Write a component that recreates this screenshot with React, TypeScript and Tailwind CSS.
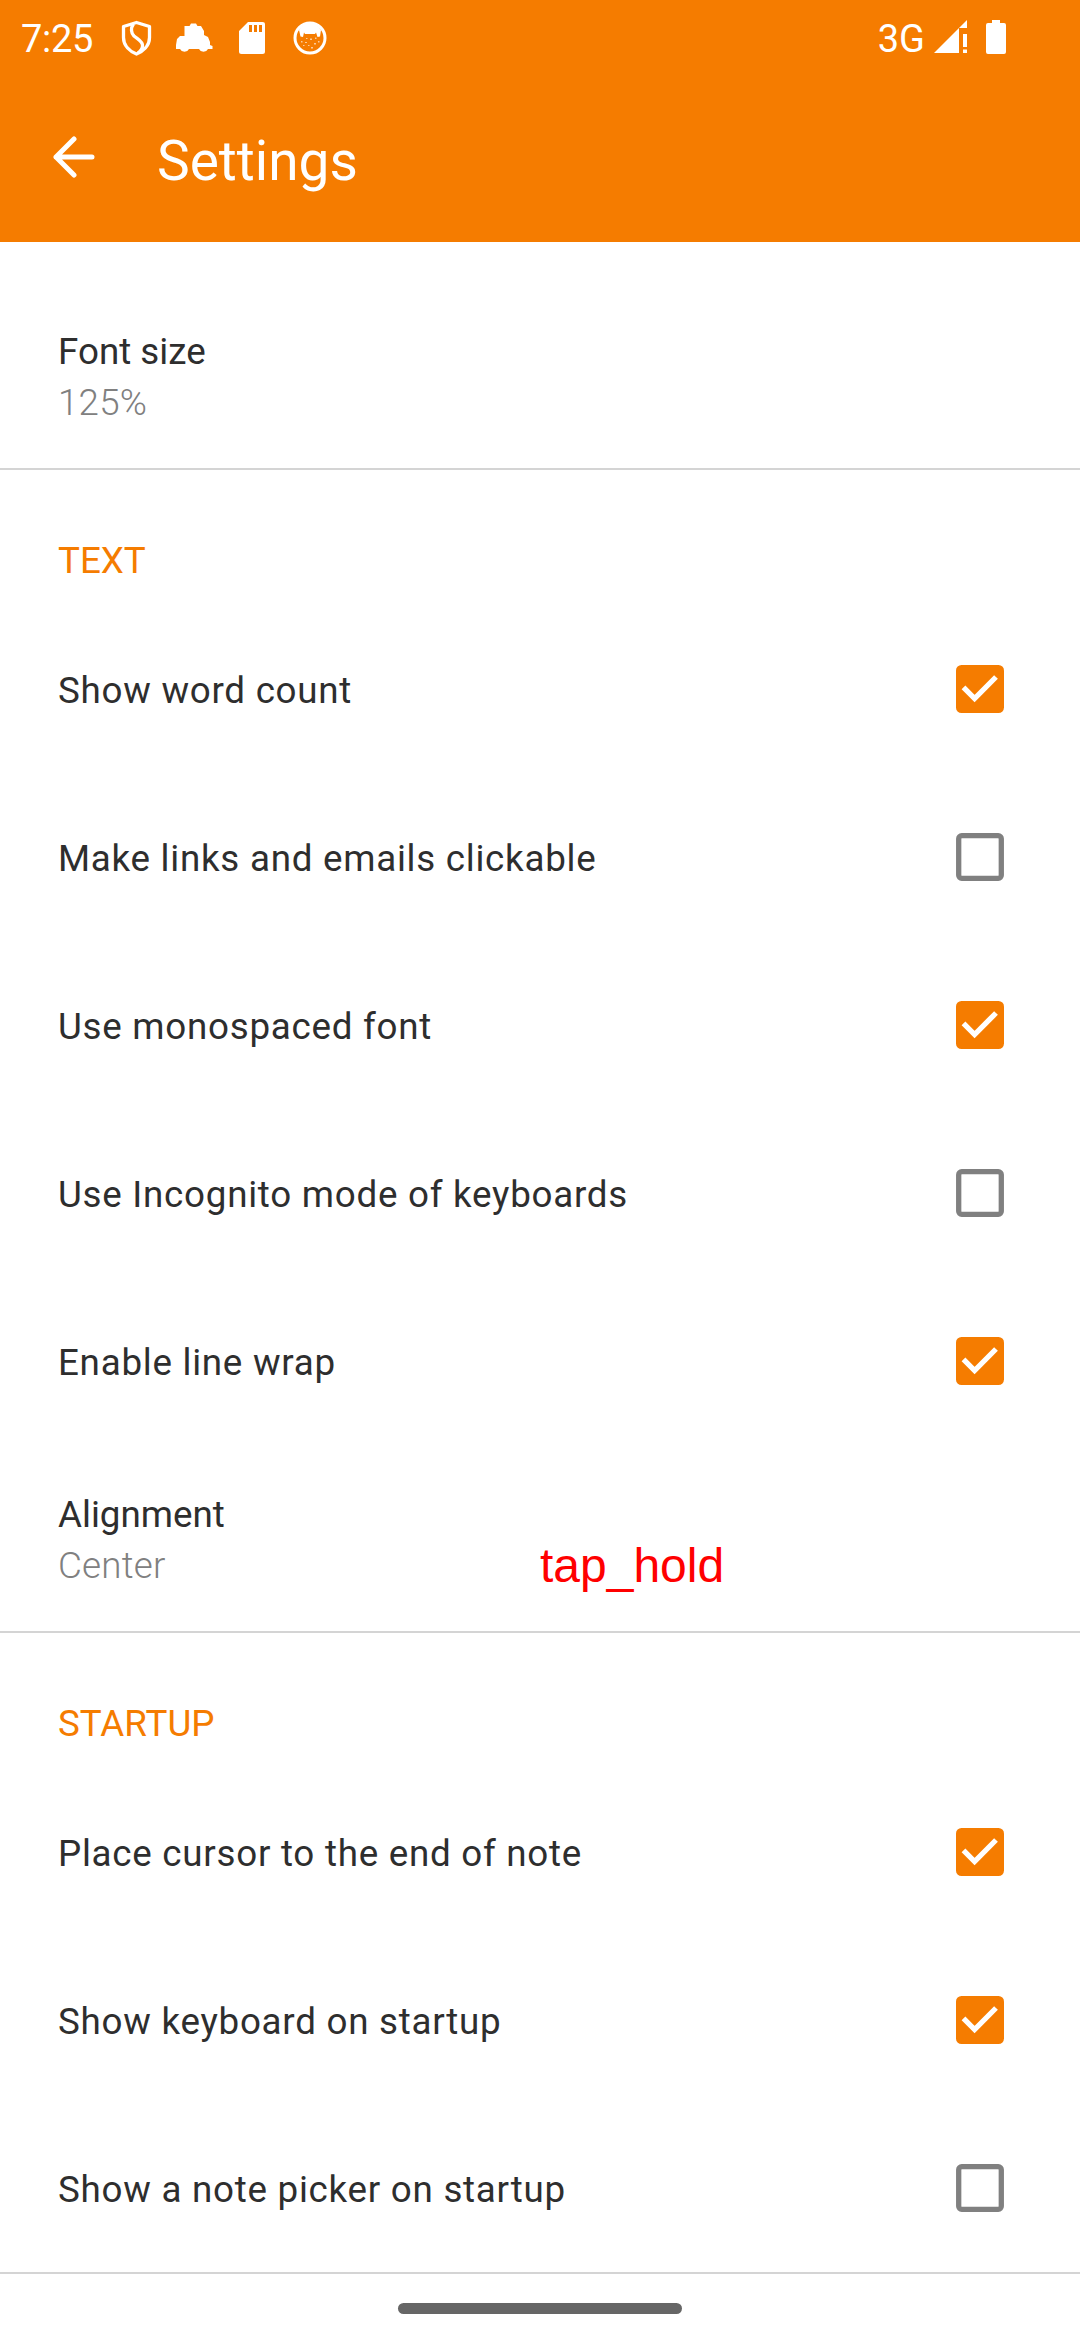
import React from "react";

const ORANGE = "#f57c00";

function ShieldIcon() {
  return (
    <svg width="32" height="36" viewBox="0 0 32 36" fill="none" stroke="#fff" strokeWidth="3.300" strokeLinejoin="round">
      <path d="M15.500 2.500L28.500 6.500V17.500C28.500 26 22 31.500 15.500 34C9 31.500 2.500 26 2.500 17.500V6.500Z" />
      <path d="M12.500 4C9.500 8 10 13 13 16C17 19.500 22 21.500 21.500 26C21.500 28.500 19.500 31 17 33" />
    </svg>
  );
}

function CarIcon() {
  return (
    <svg width="38" height="32" viewBox="0 0 38 32" fill="#fff">
      <path d="M9.500 4H14.500L16 1.500H21L22.500 4H26L29 9V13L33 15L35 20V23L37.500 24V27H33A5 5 0 0 1 24 27H14A5 5 0 0 1 5 27H1V23L2 17L5 14H9.500Z" />
    </svg>
  );
}

function SdIcon() {
  return (
    <svg width="26" height="32" viewBox="0 0 26 32">
      <path fill="#fff" d="M9 0H23.500A2.500 2.500 0 0 1 26 2.500V29.500A2.500 2.500 0 0 1 23.500 32H2.500A2.500 2.500 0 0 1 0 29.500V9Z" />
      <path stroke={ORANGE} strokeWidth="3" d="M11.500 3V10M16.500 3V10M21.500 3V10" />
    </svg>
  );
}

function CatIcon() {
  return (
    <svg width="34" height="34" viewBox="0 0 34 34">
      <circle cx="17" cy="17" r="15" fill="none" stroke="#fff" strokeWidth="3" />
      <path fill="#fff" d="M6 9C11 0 23 0 28 9L27 15.500L24.500 16L23 11.500L22 13H12L11 11.500L10 16L7.500 15.500Z" />
      <g fill="#fff" opacity=".6">
        <rect x="8" y="20" width="1.500" height="1.500" /><rect x="13" y="17" width="1.500" height="1" />
        <rect x="17" y="17.500" width="2" height="1.500" /><rect x="22" y="16.500" width="1.500" height="1.500" />
        <rect x="25" y="20" width="1.500" height="1.500" /><rect x="12" y="21" width="2" height="1" />
        <rect x="18" y="26" width="2" height="1.500" /><rect x="10" y="24" width="1.500" height="1" />
        <rect x="21" y="22" width="2" height="1.500" /><rect x="15" y="24" width="1.500" height="1" />
      </g>
    </svg>
  );
}

function StatusBar() {
  return (
    <div className="flex h-[76px] items-center text-white">
      <span className="ml-[21px] w-[100px] pt-[2px] text-[38px] leading-none tracking-[-0.3px]">7:25</span>
      <div className="flex flex-1 items-center">
        <ShieldIcon />
        <div className="ml-[22px]"><CarIcon /></div>
        <div className="ml-[26px]"><SdIcon /></div>
        <div className="ml-[28px]"><CatIcon /></div>
      </div>
      <span className="pt-[1px] text-[38px] font-[450] leading-none">3G</span>
      <svg className="mb-[2px] ml-[9px]" width="34" height="34" viewBox="0 0 34 34" fill="#fff">
        <path d="M0 33L33 0V8H25V33ZM29 14H33V27H29ZM29 29.500H33V33H29Z" />
      </svg>
      <svg className="mr-[74px] mb-[2px] ml-[18px]" width="20" height="34" viewBox="0 0 20 34" fill="#fff">
        <path d="M6 0H14V3H18A2 2 0 0 1 20 5V32A2 2 0 0 1 18 34H2A2 2 0 0 1 0 32V5A2 2 0 0 1 2 3H6Z" />
      </svg>
    </div>
  );
}

function Checkbox({ checked }: { checked: boolean }) {
  return (
    <svg className="mr-[76px]" width="48" height="48" viewBox="0 0 48 48" fill="none">
      {checked ? (
        <>
          <rect width="48" height="48" rx="5.500" fill={ORANGE} />
          <path d="M7.500 22.300L18.600 33.500L40 12" stroke="#fff" strokeWidth="5.300" />
        </>
      ) : (
        <rect x="2.700" y="2.700" width="42.600" height="42.600" rx="3" stroke="#808080" strokeWidth="5.300" />
      )}
    </svg>
  );
}

function CheckRow({ label, checked }: { label: string; checked: boolean }) {
  return (
    <div className="flex h-[168px] items-center justify-between pl-[58px]">
      <span className="pt-[4px] text-[36.75px] leading-[44px] tracking-[0.735px]">{label}</span>
      <Checkbox checked={checked} />
    </div>
  );
}

function ValueRow({ label, value }: { label: string; value: string }) {
  return (
    <div className="flex h-[186px] flex-col pt-[48px] pl-[58px] text-[36.75px] leading-[44px]">
      <span>{label}</span>
      <span className="mt-[7px] font-light tracking-[0.2px] text-[#808080]">{value}</span>
    </div>
  );
}

function SectionTitle({ children }: { children: React.ReactNode }) {
  return (
    <h2 className="h-[135px] pt-[69px] pl-[58px] text-[36.75px] leading-[44px] text-[#f57c00]">{children}</h2>
  );
}

const Divider = () => <div className="h-[2px] bg-[#d4d4d4]" />;

export default function App() {
  return (
    <div className="relative h-[2340px] w-[1080px] overflow-hidden bg-white font-[Roboto,sans-serif] text-[#2e2e2e]">
      <header className="h-[242px] bg-[#f57c00]">
        <StatusBar />
        <div className="flex h-[166px] items-start text-white">
          <svg className="mt-[60px] ml-[53px]" width="42" height="42" viewBox="0 0 42 42" fill="none" stroke="#fff" strokeWidth="5" strokeLinecap="round" strokeLinejoin="round">
            <path d="M21 3L3 21L21 39M3 21H39" />
          </svg>
          <h1 className="mt-[53px] ml-[62px] text-[55px] leading-[64px]">Settings</h1>
        </div>
      </header>
      <main className="pt-[40px]">
        <ValueRow label="Font size" value="125%" />
        <Divider />
        <SectionTitle>TEXT</SectionTitle>
        <CheckRow label="Show word count" checked />
        <CheckRow label="Make links and emails clickable" checked={false} />
        <CheckRow label="Use monospaced font" checked />
        <CheckRow label="Use Incognito mode of keyboards" checked={false} />
        <CheckRow label="Enable line wrap" checked />
        <ValueRow label="Alignment" value="Center" />
        <Divider />
        <SectionTitle>STARTUP</SectionTitle>
        <CheckRow label="Place cursor to the end of note" checked />
        <CheckRow label="Show keyboard on startup" checked />
        <CheckRow label="Show a note picker on startup" checked={false} />
        <Divider />
      </main>
      <div className="mx-auto mt-[29px] h-[11px] w-[284px] rounded-full bg-[#666666]" />
      <span className="absolute top-[1539px] left-[540px] font-['Liberation_Sans',sans-serif] text-[48px] leading-[54px] text-[#ff0000]">
        tap_hold
      </span>
    </div>
  );
}
